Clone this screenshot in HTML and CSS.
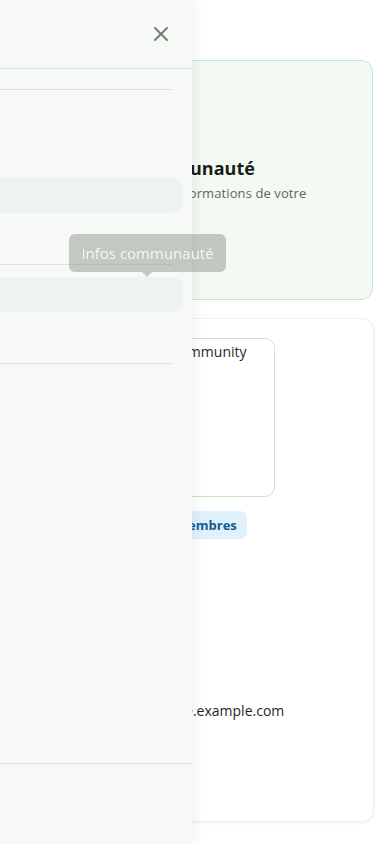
FILE: index.html
```html
<!DOCTYPE html>
<html lang="fr">
<head>
<meta charset="utf-8">
<meta name="viewport" content="width=device-width, initial-scale=1">
<title>Communauté</title>
<link rel="stylesheet" href="styles.css">
</head>
<body>
<main class="main">
  <section class="card hero">
    <div class="hero-icon"></div>
    <h2 class="hero-title">Infos de la communauté</h2>
    <p class="hero-text">Modifiez ici toutes les informations de votre communauté.</p>
  </section>
  <section class="card details">
    <div class="field">Bienvenue dans la community</div>
    <div class="badges">
      <span class="badge">Association</span>
      <span class="badge">128 membres</span>
    </div>
    <div class="info">
      <span class="info-label">Site web</span>
      <span class="info-value">https://macommunaute.example.com</span>
    </div>
  </section>
</main>
<aside class="drawer">
  <header class="drawer-head">
    <button class="close" aria-label="Fermer">
      <svg width="14" height="14" viewBox="0 0 14 14"><path d="M1 1L13 13M13 1L1 13" stroke="currentColor" stroke-width="1.8" stroke-linecap="round"/></svg>
    </button>
  </header>
  <nav class="drawer-body">
    <div class="rule"></div>
    <div class="nav-item first"></div>
    <div class="rule gap-top"></div>
    <div class="nav-item second"></div>
    <div class="rule gap-top"></div>
  </nav>
  <footer class="drawer-foot"></footer>
</aside>
<div class="tooltip">Infos communauté</div>
</body>
</html>
```
FILE: styles.css
```css
* { box-sizing: border-box; }
html, body { margin: 0; padding: 0; }
body {
  background: #ffffff;
  font-family: "Open Sans", "Noto Sans", sans-serif;
  color: #1d211d;
  width: 390px;
  height: 844px;
  overflow: hidden;
}
.main {
  padding: 60px 17px 0 16px;
  display: flex;
  flex-direction: column;
  gap: 18px;
}
.card {
  border-radius: 12px;
}
.hero {
  height: 240px;
  background: #f3f9f3;
  border: 1px solid #c9e5ca;
  padding: 19px 20px;
  display: flex;
  flex-direction: column;
  align-items: flex-start;
}
.hero-icon {
  width: 56px;
  height: 56px;
  border-radius: 14px;
  background: #dcefdd;
  flex: none;
}
.hero-title {
  margin: 20px 0 0;
  font-size: 18px;
  font-weight: 700;
  line-height: 24px;
  color: #1a1d1a;
}
.hero-text {
  margin: 4px 0 0;
  font-size: 13px;
  line-height: 18px;
  letter-spacing: 0.1px;
  color: #5e675e;
}
.details {
  height: 504px;
  margin-right: -1px;
  background: #fff;
  border: 1px solid #eef0ee;
  box-shadow: 0 1px 3px rgba(0, 0, 0, 0.06);
  padding: 19px 20px;
  display: flex;
  flex-direction: column;
  align-items: flex-start;
}
.field {
  width: 238px;
  height: 159px;
  border: 1px solid #c9e5ca;
  border-radius: 10px;
  padding: 3px 12px;
  font-size: 14px;
  line-height: 20px;
  color: #2a2a2a;
}
.badges {
  margin-top: 14px;
  display: flex;
  gap: 8px;
}
.badge {
  height: 28px;
  padding: 0 10px;
  border-radius: 7px;
  background: #e1f1fc;
  color: #0d5e92;
  font-size: 13px;
  font-weight: 700;
  line-height: 28px;
}
.info {
  margin-top: 138px;
  display: flex;
  flex-direction: column;
  gap: 4px;
  font-size: 14px;
  line-height: 20px;
}
.info-label { color: #6a736a; font-size: 12px; }
.info-value { color: #1f1f1f; }

.drawer {
  position: fixed;
  left: 0;
  top: 0;
  width: 192px;
  height: 844px;
  background: #f7f9f7;
  box-shadow: 2px 0 12px rgba(0, 0, 0, 0.07);
  display: flex;
  flex-direction: column;
}
.drawer-head {
  height: 69px;
  border-bottom: 1px solid #dbe7db;
  display: flex;
  justify-content: flex-end;
  align-items: flex-start;
  padding: 27px 24px 0 0;
  flex: none;
}
.close {
  border: none;
  background: none;
  padding: 0;
  width: 14px;
  height: 14px;
  color: #6d7b6e;
  display: block;
}
.close svg { display: block; }
.drawer-body {
  flex: 1;
  padding: 20px 20px 0 0;
  display: flex;
  flex-direction: column;
}
.rule {
  height: 1px;
  background: #e0e4e0;
  flex: none;
}
.gap-top { margin-top: 51px; }
.nav-item {
  height: 35px;
  margin-right: -11px;
  margin-left: -12px;
  border-radius: 10px;
  background: #edf3ee;
  flex: none;
}
.nav-item.first { margin-top: 88px; }
.nav-item.second { margin-top: 12px; }
.drawer-foot {
  height: 81px;
  border-top: 1px solid #e0e4e0;
  flex: none;
}
.tooltip {
  position: fixed;
  left: 69px;
  top: 234px;
  width: 157px;
  height: 38px;
  border-radius: 6px;
  background: rgba(110, 122, 110, 0.38);
  color: #f5f7f5;
  font-size: 15px;
  line-height: 38px;
  text-align: center;
}
.tooltip::after {
  content: "";
  position: absolute;
  left: 73px;
  bottom: -5px;
  border-left: 5px solid transparent;
  border-right: 5px solid transparent;
  border-top: 5px solid rgba(110, 122, 110, 0.38);
}
```
